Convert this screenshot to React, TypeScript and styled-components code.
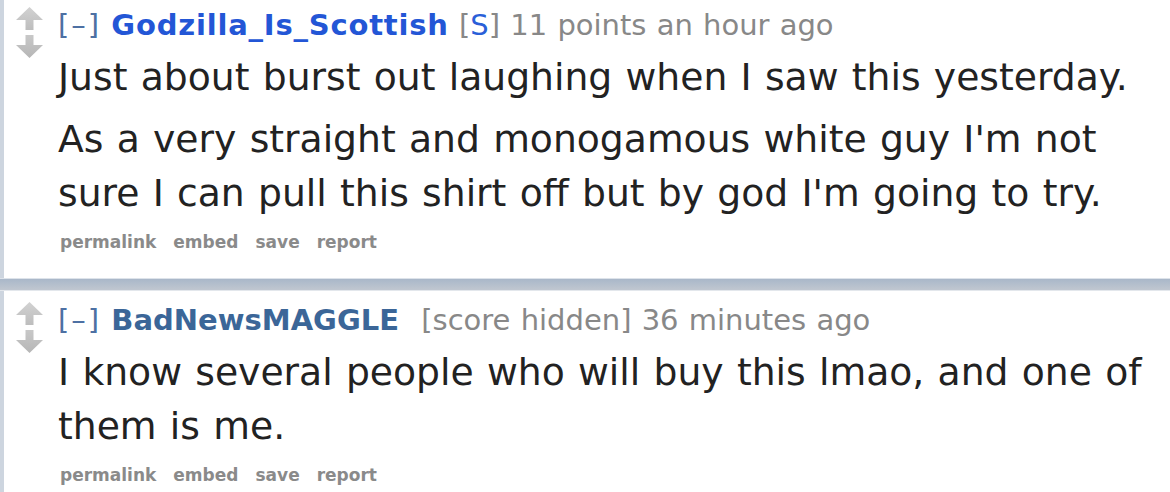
import React from "react";
import styled, { createGlobalStyle } from "styled-components";

const GlobalStyle = createGlobalStyle`
  html, body {
    margin: 0;
    padding: 0;
    background: #ffffff;
  }
  body {
    font-family: "DejaVu Sans", Verdana, "Liberation Sans", sans-serif;
    overflow: hidden;
  }
`;

const Page = styled.div`
  width: 1170px;
  height: 492px;
  overflow: hidden;
  background: #ffffff;
`;

const Comment = styled.div<{ $top: number; $bottom: number }>`
  display: flex;
  align-items: flex-start;
  border-left: 4px solid #cdd5df;
  padding: ${(p) => p.$top}px 0 ${(p) => p.$bottom}px 12px;
  background: #ffffff;
`;

const Votes = styled.div`
  flex: 0 0 27px;
  width: 27px;
  margin-right: 15px;
  display: flex;
`;

const Entry = styled.div`
  flex: 1;
  min-width: 0;
`;

const Tagline = styled.div`
  font-size: 29px;
  line-height: 36px;
  word-spacing: 1px;
  color: #888888;
  white-space: nowrap;
`;

const Expand = styled.span`
  color: #4d70a3;
  letter-spacing: 2px;
`;

const Author = styled.span<{ $submitter?: boolean }>`
  font-weight: bold;
  color: ${(p) => (p.$submitter ? "#2356d6" : "#3b6698")};
  letter-spacing: ${(p) => (p.$submitter ? "0.8px" : "0")};
`;

const Flair = styled.span`
  color: #888888;
`;

const SubmitterMark = styled.span`
  color: #2a5fd8;
`;

const Gap = styled.span`
  display: inline-block;
  width: 12px;
`;

const Body = styled.div`
  margin-top: 7px;
  font-size: 37.7px;
  line-height: 54px;
  word-spacing: 1.3px;
  color: #222222;
`;

const Para = styled.p`
  margin: 0;
  & + & {
    margin-top: 8px;
  }
`;

const Buttons = styled.ul`
  list-style: none;
  margin: 12px 0 0 2px;
  padding: 0;
  display: flex;
  gap: 17px;
  font-size: 17px;
  line-height: 20px;
  font-weight: bold;
  color: #8a8a8a;
`;

const Button = styled.li`
  margin: 0;
`;

const Separator = styled.div`
  height: 11px;
  border-top: 1px solid #dde3ea;
  border-bottom: 1px solid #e3e7ec;
  background: linear-gradient(#a9b7c9, #c0c7d0);
`;

const Arrows: React.FC = () => (
  <svg width="27" height="51" viewBox="0 0 27 51" aria-hidden="true">
    <defs>
      <linearGradient id="arrowUp" x1="0" y1="0" x2="0" y2="1">
        <stop offset="0" stopColor="#d2d2d2" />
        <stop offset="1" stopColor="#bdbdbd" />
      </linearGradient>
      <linearGradient id="arrowDown" x1="0" y1="0" x2="0" y2="1">
        <stop offset="0" stopColor="#c8c8c8" />
        <stop offset="1" stopColor="#b6b6b6" />
      </linearGradient>
    </defs>
    <path d="M13.5 0 L27 13 L17.5 13 L17.5 23 L9.5 23 L9.5 13 L0 13 Z" fill="url(#arrowUp)" />
    <path d="M9.5 28 L17.5 28 L17.5 38 L27 38 L13.5 51 L0 38 L9.5 38 Z" fill="url(#arrowDown)" />
  </svg>
);

const FlatButtons: React.FC = () => (
  <Buttons>
    <Button>permalink</Button>
    <Button>embed</Button>
    <Button>save</Button>
    <Button>report</Button>
  </Buttons>
);

export default function App() {
  return (
    <Page>
      <GlobalStyle />
      <Comment $top={7} $bottom={26}>
        <Votes>
          <Arrows />
        </Votes>
        <Entry>
          <Tagline>
            <Expand>[–]</Expand> <Author $submitter>Godzilla_Is_Scottish</Author>{" "}
            <Flair>
              [<SubmitterMark>S</SubmitterMark>]
            </Flair>{" "}
            11 points an hour ago
          </Tagline>
          <Body>
            <Para>Just about burst out laughing when I saw this yesterday.</Para>
            <Para>
              As a very straight and monogamous white guy I'm not sure I can pull this shirt off but by god I'm going to try.
            </Para>
          </Body>
          <FlatButtons />
        </Entry>
      </Comment>
      <Separator />
      <Comment $top={11} $bottom={20}>
        <Votes>
          <Arrows />
        </Votes>
        <Entry>
          <Tagline>
            <Expand>[–]</Expand> <Author>BadNewsMAGGLE</Author>
            <Gap /> [score hidden] 36 minutes ago
          </Tagline>
          <Body>
            <Para>I know several people who will buy this lmao, and one of them is me.</Para>
          </Body>
          <FlatButtons />
        </Entry>
      </Comment>
    </Page>
  );
}
